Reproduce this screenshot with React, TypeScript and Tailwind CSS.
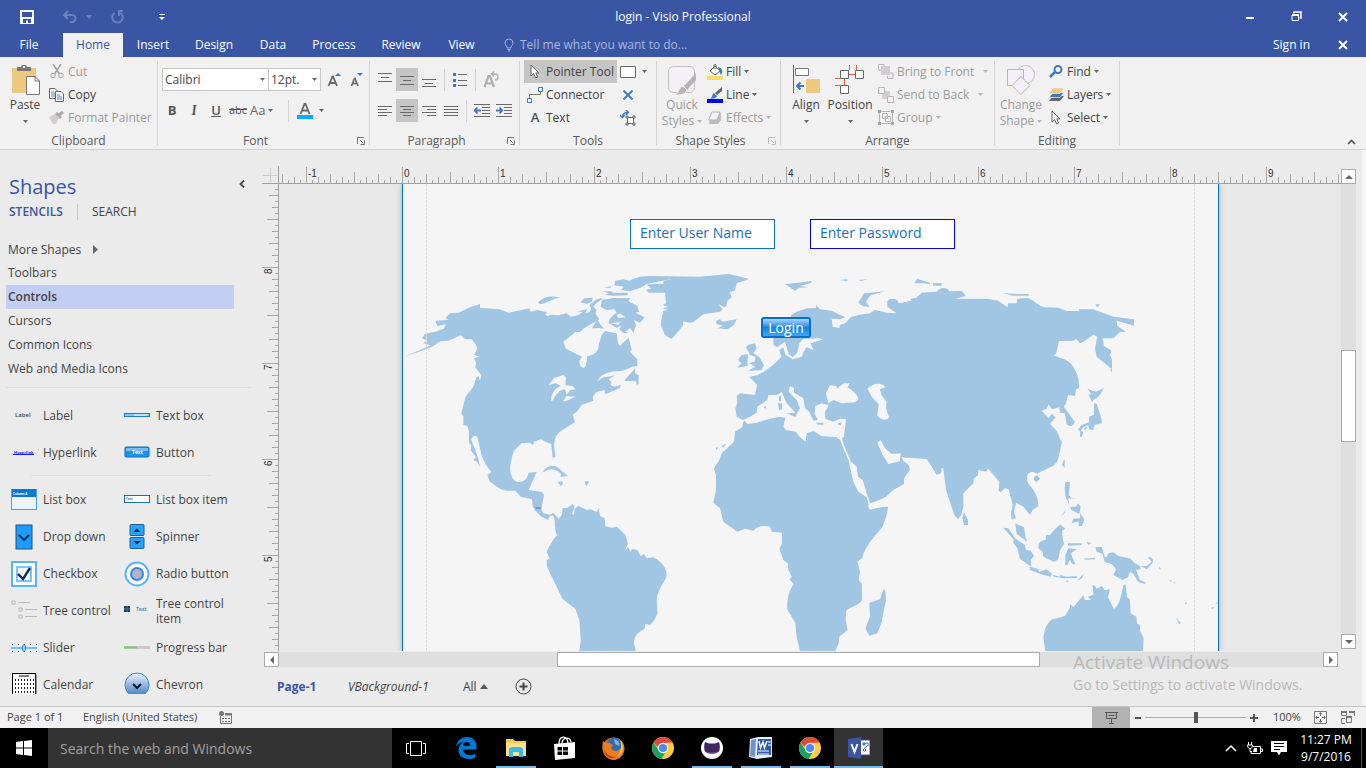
import React from "react";

type Kids = { children?: React.ReactNode };

/* ---------- small building blocks ---------- */

function Svg({ w, h, children, vb }: { w: number; h: number; vb?: string } & Kids) {
  return (
    <svg width={w} height={h} viewBox={vb ?? `0 0 ${w} ${h}`} fill="none" className="shrink-0" aria-hidden="true">
      {children}
    </svg>
  );
}

function Caret({ light }: { light?: boolean }) {
  return (
    <Svg w={5} h={3}>
      <path d="M0 0H5L2.5 3Z" fill={light ? "#b5b5b5" : "#666"} />
    </Svg>
  );
}

function Group({ title, width, launcher, children }: { title: string; width: string; launcher?: "on" | "off" } & Kids) {
  return (
    <section className={`flex shrink-0 flex-col border-r border-[#d2d2d2] ${width}`}>
      <div className="flex h-[74px] shrink-0 items-start">{children}</div>
      <div className="flex h-3 shrink-0 items-center">
        <h2 className="flex-1 text-center text-[12px] leading-3 text-[#5a5a5a]">{title}</h2>
        {launcher && (
          <button aria-label={`${title} settings`} className="ml-1 mr-1">
            <Svg w={8} h={8}>
              <path d="M0.5 7V0.5H7M3 3L6 6M7.5 3.5V7.5H3.5" stroke={launcher === "on" ? "#777" : "#bbb"} />
            </Svg>
          </button>
        )}
      </div>
    </section>
  );
}

function Cmd({ icon, label, caret, off, wide }: { icon: React.ReactNode; label: string; caret?: boolean; off?: boolean; wide?: boolean }) {
  return (
    <button className={`flex h-[23px] items-center gap-[3px] whitespace-nowrap ${off ? "text-[#9c9c9c]" : "text-[#444]"}`}>
      <span className="flex w-4 justify-center">{icon}</span>
      <span>{label}</span>
      {caret && (
        <span className={wide ? "ml-[6px]" : ""}>
          <Caret light={off} />
        </span>
      )}
    </button>
  );
}

function Glyph({ label, on, children }: { label: string; on?: boolean } & Kids) {
  return (
    <button aria-label={label} className={`flex h-[23px] w-[22px] items-center justify-center ${on ? "bg-[#c5c5c5]" : ""}`}>
      {children}
    </button>
  );
}

function Lines({ d }: { d: string }) {
  return (
    <Svg w={14} h={16}>
      <path d={d} stroke="#6a6a6a" />
    </Svg>
  );
}

const Sep = () => <span className="block h-[22px] w-px bg-[#d2d2d2]" />;

const PointerIcon = () => (
  <Svg w={10} h={15}>
    <path d="M1 1V12L3.6 9.6L5.6 14L7.6 13L5.8 8.9H9Z" fill="#fff" stroke="#666" />
  </Svg>
);

/* ---------- title bar and tabs ---------- */

function TitleBar() {
  return (
    <header className="bg-[#3955a3] text-white">
      <div className="relative flex h-[33px] items-center">
        <button aria-label="Save" className="ml-5">
          <Svg w={14} h={14}>
            <path d="M0 0H14V14H0Z" fill="#fff" />
            <path d="M2 2H12V7H2ZM3 9H11V13H8V10.500H6V13H3Z" fill="#3955a3" />
          </Svg>
        </button>
        <button aria-label="Undo" className="ml-7 flex items-center gap-2">
          <Svg w={16} h={14}>
            <path d="M2 5H10A3.500 3.500 0 0 1 10 12H8M6 1L2 5L6 9" stroke="#6c82c0" strokeWidth="2" />
          </Svg>
          <Svg w={6} h={4}>
            <path d="M0 0H6L3 4Z" fill="#6c82c0" />
          </Svg>
        </button>
        <button aria-label="Redo" className="ml-[18px]">
          <Svg w={15} h={14}>
            <path d="M4.500 3A5.300 5.300 0 1 0 10.500 3M8 1H13M9 1V6" stroke="#6c82c0" strokeWidth="2" />
          </Svg>
        </button>
        <button aria-label="Customize toolbar" className="ml-[34px]">
          <Svg w={6} h={6}>
            <path d="M0 0.500H6" stroke="#fff" />
            <path d="M0 3H6L3 6Z" fill="#fff" />
          </Svg>
        </button>
        <h1 className="pointer-events-none absolute inset-x-0 text-center text-[12px]">login - Visio Professional</h1>
        <div className="ml-auto flex items-center gap-9 pr-[18px]">
          <button aria-label="Minimize">
            <Svg w={10} h={10}>
              <path d="M1 6H9" stroke="#fff" strokeWidth="2" />
            </Svg>
          </button>
          <button aria-label="Restore">
            <Svg w={11} h={11}>
              <path d="M3 2.500V1H10V7H8.500" stroke="#fff" strokeWidth="1.500" />
              <path d="M1 4H7.500V9.500H1Z" stroke="#fff" />
              <path d="M1 4H8" stroke="#fff" strokeWidth="2" />
            </Svg>
          </button>
          <CloseIcon label="Close" />
        </div>
      </div>
      <nav className="flex h-6 items-center text-[12px]">
        <button className="h-6 w-[58px]">File</button>
        <button className="ml-[5px] h-6 w-[60px] bg-[#f1f1f1] text-[#3955a3]">Home</button>
        {[
          ["Insert", "w-[60px]"],
          ["Design", "w-[62px]"],
          ["Data", "w-[56px]"],
          ["Process", "w-[66px]"],
          ["Review", "w-[68px]"],
          ["View", "w-[53px]"],
        ].map(([t, w]) => (
          <button key={t} className={`h-6 ${w}`}>
            {t}
          </button>
        ))}
        <label className="ml-4 flex items-center gap-[6px]">
          <Svg w={10} h={14}>
            <path d="M3 10V8.500C1.500 7.500 1 6.200 1 5A4 4 0 0 1 9 5C9 6.200 8.500 7.500 7 8.500V10ZM3.500 11.500H6.500M4 13H6" stroke="#9fb0dc" />
          </Svg>
          <input
            aria-label="Tell me what you want to do"
            placeholder="Tell me what you want to do..."
            className="w-[200px] bg-transparent outline-none placeholder:text-[#a9b7dd]"
          />
        </label>
        <button className="ml-auto mr-7">Sign in</button>
        <span className="mr-[18px] flex">
          <CloseIcon label="Close document" />
        </span>
      </nav>
    </header>
  );
}

function CloseIcon({ label }: { label: string }) {
  return (
    <button aria-label={label}>
      <Svg w={10} h={10}>
        <path d="M1 1L9 9M9 1L1 9" stroke="#fff" strokeWidth="2" />
      </Svg>
    </button>
  );
}

/* ---------- ribbon ---------- */

function Ribbon() {
  return (
    <div className="relative flex h-[93px] shrink-0 overflow-hidden border-b border-[#d2d2d2] bg-[#f1f1f1] pb-1 pt-1 text-[12px] text-[#444]">
      <Group title="Clipboard" width="w-[158px]">
        <button className="ml-1 mt-[3px] flex w-[42px] flex-col items-center">
          <Svg w={30} h={32}>
            <path d="M2 4H26V29H2Z" fill="#edc87e" />
            <path d="M7 7V3H11C11 0 17 0 17 3H21V7Z" fill="#777" />
            <path d="M13 2H15V4H13Z" fill="#f1f1f1" />
            <path d="M16.500 12.500H25L29.500 17V30.500H16.500Z" fill="#fff" stroke="#777" />
            <path d="M25 12.500V17H29.500" stroke="#777" />
          </Svg>
          <span className="mb-[7px] mt-[1px] leading-4">Paste</span>
          <Caret />
        </button>
        <div className="-mt-px ml-[3px] flex flex-col">
          <Cmd
            off
            label="Cut"
            icon={
              <Svg w={14} h={15}>
                <path d="M3 0L9.500 10M11 0L4.500 10" stroke="#a5a5a5" strokeWidth="1.700" />
                <circle cx="3" cy="11.500" r="2.300" stroke="#a5a5a5" />
                <circle cx="11" cy="11.500" r="2.300" stroke="#a5a5a5" />
              </Svg>
            }
          />
          <Cmd
            label="Copy"
            icon={
              <Svg w={16} h={14}>
                <path d="M0.500 0.500H6L9.500 4V10.500H0.500Z" fill="#fff" stroke="#666" />
                <path d="M2 4H5M2 6H6M2 8H6" stroke="#4b83bc" />
                <path d="M6.500 3.500H12L14.500 6V13.500H6.500Z" fill="#fff" stroke="#666" />
                <path d="M8 7H11M8 9H13M8 11H13" stroke="#4b83bc" />
              </Svg>
            }
          />
          <Cmd
            off
            label="Format Painter"
            icon={
              <Svg w={16} h={14}>
                <path d="M0 6L6 3L10 7L7 13H4Z" fill="#d3ccd3" />
                <path d="M6 3L8 1L13 6L11 8Z" fill="#aaa" />
                <path d="M10 4L14 1" stroke="#aaa" strokeWidth="3" />
              </Svg>
            }
          />
        </div>
      </Group>

      <Group title="Font" width="w-[212px]" launcher="on">
        <div className="ml-1 mt-[7px] flex flex-col gap-2">
          <div className="flex items-center">
            <span className="relative flex">
              <select aria-label="Font" className="h-[23px] w-[107px] appearance-none border border-[#c6c6c6] bg-white pl-[2px] text-[12px]">
                <option>Calibri</option>
              </select>
              <span className="pointer-events-none absolute right-1 top-[10px]">
                <Caret />
              </span>
            </span>
            <span className="relative -ml-px flex">
              <select aria-label="Font size" className="h-[23px] w-[53px] appearance-none border border-[#c6c6c6] bg-white pl-[2px] text-[12px]">
                <option>12pt.</option>
              </select>
              <span className="pointer-events-none absolute right-1 top-[10px]">
                <Caret />
              </span>
            </span>
            <button aria-label="Increase font size" className="ml-[6px]">
              <Svg w={14} h={16}>
                <path d="M1.500 14L5.500 4.500H6L10 14M3 11H8.500" stroke="#6a6a6a" strokeWidth="1.800" />
                <path d="M8 4H14L11 1Z" fill="#3f7ab8" />
              </Svg>
            </button>
            <button aria-label="Decrease font size" className="ml-[9px]">
              <Svg w={13} h={16}>
                <path d="M1.500 14L4.500 6.500H5L8 14M2.500 11.500H7" stroke="#6a6a6a" strokeWidth="1.700" />
                <path d="M7 1H13L10 4Z" fill="#3f7ab8" />
              </Svg>
            </button>
          </div>
          <div className="flex h-[23px] items-center text-[13px] text-[#555]">
            <button className="w-5 font-bold">B</button>
            <button className="ml-[2px] w-5 font-serif font-bold italic">I</button>
            <button className="ml-[2px] w-5 font-semibold underline">U</button>
            <button className="w-6 text-[11px] line-through">abc</button>
            <button className="flex w-[30px] items-center gap-[3px] text-[#6a6a6a]">
              <span>Aa</span>
              <Caret />
            </button>
            <span className="mx-2">
              <Sep />
            </span>
            <button aria-label="Font color" className="flex items-center gap-[6px]">
              <Svg w={16} h={16}>
                <path d="M3.500 11L7.500 1H8.500L12.500 11M5 7.500H11" stroke="#6a6a6a" strokeWidth="1.800" />
                <path d="M0 12H16V16H0Z" fill="#00adef" />
              </Svg>
              <Caret />
            </button>
          </div>
        </div>
      </Group>

      <Group title="Paragraph" width="w-[150px]" launcher="on">
        <div className="ml-1 mt-[7px] flex flex-col gap-2">
          <div className="flex items-center">
            <Glyph label="Align top"><Lines d="M0 1.500H14M3 5.500H11M0 9.500H14" /></Glyph>
            <Glyph label="Align middle" on><Lines d="M0 4.500H14M3 8.500H11M0 12.500H14" /></Glyph>
            <Glyph label="Align bottom"><Lines d="M0 7.500H14M3 11.500H11M0 14.500H14" /></Glyph>
            <span className="mx-1"><Sep /></span>
            <Glyph label="Bullets">
              <Svg w={14} h={16}>
                <path d="M5 2.500H14M5 8.500H14M5 13.500H14" stroke="#6a6a6a" />
                <path d="M0 1H3V4H0ZM0 7H3V10H0ZM0 12H3V15H0Z" fill="#3f7ab8" />
              </Svg>
            </Glyph>
            <span className="mx-1"><Sep /></span>
            <Glyph label="Rotate text">
              <Svg w={16} h={17}>
                <path d="M1.500 16L5.500 5H7L11 16M3 12.500H10" stroke="#b0b0b0" strokeWidth="2.200" />
                <path d="M9 3H12A2.500 2.500 0 0 1 12 9M11 0.500L8.500 3L11 5.500" stroke="#b0b0b0" strokeWidth="1.300" />
              </Svg>
            </Glyph>
          </div>
          <div className="flex items-center">
            <Glyph label="Align left"><Lines d="M0 3.500H14M0 6.500H9M0 9.500H14M0 12.500H9" /></Glyph>
            <Glyph label="Center" on><Lines d="M0 3.500H14M3 6.500H11M0 9.500H14M3 12.500H11" /></Glyph>
            <Glyph label="Align right"><Lines d="M0 3.500H14M5 6.500H14M0 9.500H14M5 12.500H14" /></Glyph>
            <Glyph label="Justify"><Lines d="M0 3.500H14M0 6.500H14M0 9.500H14M0 12.500H14" /></Glyph>
            <span className="mx-1"><Sep /></span>
            <Glyph label="Decrease indent">
              <Svg w={16} h={13}>
                <path d="M0 0.500H16M8 3.500H16M8 6.500H16M8 9.500H16M0 12.500H16" stroke="#6a6a6a" />
                <path d="M7 6.500H1M3.500 3.500L0.800 6.500L3.500 9.500" stroke="#3f7ab8" strokeWidth="1.800" />
              </Svg>
            </Glyph>
            <Glyph label="Increase indent">
              <Svg w={16} h={13}>
                <path d="M0 0.500H16M8 3.500H16M8 6.500H16M8 9.500H16M0 12.500H16" stroke="#6a6a6a" />
                <path d="M0 6.500H6M3.500 3.500L6.200 6.500L3.500 9.500" stroke="#3f7ab8" strokeWidth="1.800" />
              </Svg>
            </Glyph>
          </div>
        </div>
      </Group>

      <Group title="Tools" width="w-[137px]">
        <div className="-mt-px ml-1 flex flex-col">
          <button className="flex h-[23px] w-[93px] items-center gap-[6px] whitespace-nowrap bg-[#c5c5c5] pl-[6px]">
            <PointerIcon />
            Pointer Tool
          </button>
          <button className="flex h-[23px] items-center gap-[3px] pl-[3px]">
            <Svg w={16} h={16}>
              <path d="M2.500 11V7.500H13.500V5" stroke="#777" />
              <path d="M0.500 11.500H4.500V15.500H0.500ZM11.500 0.500H15.500V4.500H11.500Z" fill="#fff" stroke="#3f7ab8" />
            </Svg>
            Connector
          </button>
          <button className="flex h-[23px] items-center gap-[6px] pl-[6px]">
            <span className="w-[10px] text-[13px] font-semibold text-[#555]">A</span>
            Text
          </button>
        </div>
        <div className="-mt-px ml-[3px] flex flex-col">
          <button aria-label="Rectangle" className="flex h-[23px] items-center gap-[6px]">
            <Svg w={16} h={12}>
              <path d="M0.500 0.500H15.500V11.500H0.500Z" fill="#fff" stroke="#666" />
            </Svg>
            <Caret />
          </button>
          <button aria-label="Connection point" className="flex h-[23px] w-4 items-center justify-center">
            <Svg w={12} h={10}>
              <path d="M1.500 0.500L10.500 9.500M10.500 0.500L1.500 9.500" stroke="#3f7ab8" strokeWidth="2" />
            </Svg>
          </button>
          <button aria-label="Text block" className="flex h-[23px] w-4 items-center justify-center">
            <Svg w={16} h={16}>
              <path d="M7.500 7.500H13.500V13.500H7.500Z" fill="#fff" stroke="#666" />
              <path d="M6 6H8V8H6ZM13 6H15V8H13ZM6 13H8V15H6ZM13 13H15V15H13Z" fill="#fff" stroke="#666" />
              <path d="M2.500 7C2.500 4 4 2.500 8 2.500M6 0L8.500 2.500L6 5M0 5L2.500 7.500L5 5" stroke="#3f7ab8" strokeWidth="1.300" />
            </Svg>
          </button>
        </div>
      </Group>

      <Group title="Shape Styles" width="w-[124px]" launcher="off">
        <button className="ml-[5px] mt-1 flex w-10 flex-col items-center leading-4 text-[#9c9c9c]">
          <Svg w={30} h={32}>
            <rect x="1.500" y="1.500" width="26" height="26" rx="5" fill="#f5f0f7" stroke="#c3bfc5" />
            <path d="M29 8V15L20 25L17 21Z" fill="#b5b5b5" />
            <path d="M16 21L20 25C18 30 13 30 8 30C12 28 11 23 16 21Z" fill="#b5b5b5" stroke="#f1f1f1" />
          </Svg>
          Quick
          <span className="flex items-center gap-[3px]">
            Styles <Caret light />
          </span>
        </button>
        <div className="-mt-px ml-[5px] flex flex-col">
          <Cmd
            caret
            label="Fill"
            icon={
              <Svg w={16} h={16}>
                <path d="M3 7L8 2L13 7L8 11Z" fill="#fff" stroke="#666" />
                <path d="M7 5V1.500C7 0 9 0 9 1.500V5" stroke="#666" />
                <path d="M11 3C16 4 16 8 14 11L12 7Z" fill="#3f7ab8" />
                <path d="M0 12H16V16H0Z" fill="#ffd966" />
              </Svg>
            }
          />
          <Cmd
            caret
            label="Line"
            icon={
              <Svg w={16} h={16}>
                <path d="M15 0V4L10 8L8 6Z" fill="#666" />
                <path d="M7 6L10 9C9 12 6 11 3 12C6 10 5 7 7 6Z" fill="#3f7ab8" />
                <path d="M0 12H16V16H0Z" fill="#00f" />
              </Svg>
            }
          />
          <Cmd
            off
            caret
            label="Effects"
            icon={
              <Svg w={16} h={14}>
                <path d="M4 3L14 2V9L11 13H2Z" fill="#bbb" />
                <path d="M5 1H13L10 9H1.500Z" fill="#f5f0f7" stroke="#b5b5b5" />
              </Svg>
            }
          />
        </div>
      </Group>

      <Group title="Arrange" width="w-[214px]">
        <button className="ml-[7px] mt-1 flex w-9 flex-col items-center">
          <Svg w={28} h={30}>
            <path d="M1.500 0V28" stroke="#666" />
            <path d="M3.500 3.500H16.500V10.500H3.500Z" fill="#fff" stroke="#777" />
            <path d="M14 14H28V28H14Z" fill="#edc87e" />
            <path d="M12 21H5M8.500 17.500L5 21L8.500 24.500" stroke="#3f7ab8" strokeWidth="2" />
          </Svg>
          <span className="mb-[7px] mt-[2px] leading-4">Align</span>
          <Caret />
        </button>
        <button className="ml-px mt-1 flex w-[50px] flex-col items-center">
          <Svg w={30} h={30}>
            <path d="M14.500 0V5M21.500 0V5M0 13.500H5M0 20.500H5M13 9.500H21M9.500 14V21" stroke="#e0603c" />
            <path d="M5.500 5.500H13.500V13.500H5.500ZM20.500 5.500H28.500V13.500H20.500ZM5.500 20.500H13.500V28.500H5.500Z" fill="#fff" stroke="#666" />
          </Svg>
          <span className="mb-[7px] mt-[2px] leading-4">Position</span>
          <Caret />
        </button>
        <div className="-mt-px ml-[3px] flex flex-col">
          <Cmd
            off
            caret
            wide
            label="Bring to Front"
            icon={
              <Svg w={16} h={15}>
                <path d="M0.500 6V0.500H6V2M15 9V14.500H9.500V12M0.500 6H3M15 9H12" stroke="#b5b5b5" />
                <path d="M3 2H12V11H3Z" fill="#d3ccd3" />
              </Svg>
            }
          />
          <Cmd
            off
            caret
            wide
            label="Send to Back"
            icon={
              <Svg w={16} h={16}>
                <path d="M4 4H12V12H4Z" fill="#d3ccd3" />
                <path d="M0.500 0.500H6.500V6.500H0.500ZM9.500 9.500H15.500V15.500H9.500Z" fill="#f5f5f5" stroke="#b5b5b5" />
              </Svg>
            }
          />
          <Cmd
            off
            caret
            label="Group"
            icon={
              <Svg w={16} h={15}>
                <path d="M1.500 1.500H14.500V13.500H1.500ZM4.500 3.500H9.500V8.500H4.500ZM7.500 6.500H12.500V11.500H7.500Z" stroke="#b5b5b5" />
                <path d="M0 0H3V3H0ZM13 0H16V3H13ZM0 12H3V15H0ZM13 12H16V15H13Z" fill="#a5a5a5" />
              </Svg>
            }
          />
        </div>
      </Group>

      <Group title="Editing" width="w-[125px]">
        <button className="ml-1 mt-1 flex w-[44px] flex-col items-center leading-4 text-[#9c9c9c]">
          <Svg w={30} h={32}>
            <circle cx="19.500" cy="9.500" r="9" fill="#f5f0f7" stroke="#c3bfc5" />
            <path d="M1.500 4.500H17.500V20.500H1.500Z" fill="#f5f0f7" stroke="#b5b5b5" />
            <path d="M15 11.500L24 20.500L15 29.500L6 20.500Z" fill="#f5f0f7" stroke="#b5b5b5" />
          </Svg>
          Change
          <span className="flex items-center gap-[3px]">
            Shape <Caret light />
          </span>
        </button>
        <div className="-mt-px ml-[5px] flex flex-col">
          <Cmd
            caret
            label="Find"
            icon={
              <Svg w={14} h={13}>
                <circle cx="9" cy="4.500" r="3.500" fill="#f5f5f5" stroke="#3f7ab8" strokeWidth="2" />
                <path d="M6 7L1 12" stroke="#3f7ab8" strokeWidth="2.500" />
              </Svg>
            }
          />
          <Cmd
            caret
            label="Layers"
            icon={
              <Svg w={15} h={13}>
                <path d="M4 8H15L11 13H0Z" fill="#666" />
                <path d="M4 4.500H15L11 9.500H0Z" fill="#3f7ab8" stroke="#f1f1f1" strokeWidth="0.700" />
                <path d="M4 0H15L11 5.500H0Z" fill="#edc87e" stroke="#f1f1f1" strokeWidth="0.700" />
              </Svg>
            }
          />
          <Cmd caret label="Select" icon={<PointerIcon />} />
        </div>
      </Group>
      <button aria-label="Collapse ribbon" className="ml-auto mr-[10px] self-end">
        <Svg w={9} h={6}>
          <path d="M1 5L4.500 1.500L8 5" stroke="#555" strokeWidth="1.600" />
        </Svg>
      </button>
    </div>
  );
}

/* ---------- shapes pane ---------- */

const shapeIcons: Record<string, React.ReactNode> = {
  Label: <text x="4" y="14" fontSize="6" fontWeight="600" fill="#2a4a66">Label</text>,
  "Text box": (
    <>
      <rect x="0.500" y="10.500" width="25" height="3" fill="#8ac6f5" stroke="#1b7fd0" />
      <path d="M10 12H23" stroke="#fff" />
    </>
  ),
  Hyperlink: (
    <>
      <text x="3" y="14" fontSize="4" fontWeight="700" fill="#1a1aff">Hyperlink</text>
      <path d="M2 14.500H23" stroke="#1a1aff" />
    </>
  ),
  Button: (
    <>
      <rect x="1" y="7" width="24" height="10" rx="1" fill="#1d93ee" stroke="#0a6cbc" />
      <path d="M2 8H24V11H2Z" fill="#6fbef8" />
      <text x="8" y="14" fontSize="5" fontWeight="700" fill="#fff">Text</text>
    </>
  ),
  "List box": (
    <>
      <rect x="0.500" y="2.500" width="25" height="20" fill="#eef3f7" stroke="#4aa3e8" />
      <path d="M1 2H25V10H1Z" fill="#0b78cf" />
      <text x="2" y="8" fontSize="3" fontWeight="700" fill="#fff">Column A</text>
    </>
  ),
  "List box item": (
    <>
      <rect x="0.500" y="8.500" width="25" height="7" fill="#fff" stroke="#1b6fb5" />
      <text x="2" y="13" fontSize="3" fontWeight="700" fill="#1b6fb5">Text</text>
    </>
  ),
  "Drop down": (
    <>
      <rect x="5" y="1" width="16" height="24" fill="#1e9bff" stroke="#1c4f7c" />
      <path d="M8 11L13 16L18 11" stroke="#06305a" strokeWidth="2" />
    </>
  ),
  Spinner: (
    <>
      <rect x="6" y="0.500" width="14" height="11" rx="1" fill="#2aa0ff" stroke="#1c5f96" />
      <rect x="6" y="13.500" width="14" height="11" rx="1" fill="#2aa0ff" stroke="#1c5f96" />
      <path d="M9.500 8H16.500L13 4.500ZM9.500 17H16.500L13 20.500Z" fill="#06305a" />
    </>
  ),
  Checkbox: (
    <>
      <rect x="1" y="1" width="24" height="24" fill="#fff" stroke="#5ab4fa" strokeWidth="2" />
      <rect x="6" y="6" width="14" height="14" fill="#fff" stroke="#7cc3fb" strokeWidth="2" />
      <path d="M7 13L12 18L19 7" stroke="#06305a" strokeWidth="2.400" />
    </>
  ),
  "Radio button": (
    <>
      <circle cx="13" cy="13" r="11.500" fill="#fff" stroke="#5ab4fa" strokeWidth="2" />
      <circle cx="13" cy="13" r="6" fill="#b9aecb" stroke="#2a8fe6" strokeWidth="2" />
    </>
  ),
  "Tree control": (
    <>
      <rect x="1" y="3" width="3" height="3" stroke="#bbb" />
      <rect x="8" y="10" width="3" height="3" stroke="#bbb" />
      <rect x="8" y="17" width="3" height="3" stroke="#bbb" />
      <path d="M7 4.500H19M14 11.500H26M14 18.500H26" stroke="#bbb" />
    </>
  ),
  "Tree control item": (
    <>
      <path d="M0 8H6V14H0Z" fill="#12405f" />
      <path d="M0 11H6M3 8V14" stroke="#5d8fae" strokeWidth="0.700" />
      <text x="12" y="13" fontSize="5" fontWeight="600" fill="#2b79b5">Text</text>
    </>
  ),
  Slider: (
    <>
      <path d="M0 13H26" stroke="#6fc0fa" strokeWidth="2" />
      <path d="M1 9.500H26M1 16.500H26" stroke="#3a6d95" strokeDasharray="1 5" />
      <ellipse cx="13" cy="13" rx="1.500" ry="3.500" fill="#9fd3fb" stroke="#2a8fe6" />
    </>
  ),
  "Progress bar": (
    <>
      <path d="M0 12.500H26" stroke="#c8c8c8" strokeWidth="3" />
      <path d="M0 12.500H13" stroke="#7cc87c" strokeWidth="2" />
    </>
  ),
  Calendar: (
    <>
      <rect x="1.500" y="1.500" width="23" height="24" fill="#fff" stroke="#000" />
      <path d="M8 4H18" stroke="#000" />
      <path d="M4 8H23M4 12H23M4 16H23M4 20H23" stroke="#222" strokeWidth="2" strokeDasharray="1 2" />
      <path d="M25 3V26" stroke="#444" />
    </>
  ),
  Chevron: (
    <>
      <defs>
        <linearGradient id="chev" x1="0" y1="0" x2="0" y2="1">
          <stop offset="0" stopColor="#f0f4fb" />
          <stop offset="1" stopColor="#3f74c4" />
        </linearGradient>
      </defs>
      <circle cx="13" cy="13" r="12" fill="url(#chev)" stroke="#2a8fd6" />
      <path d="M9 12L13 16L17 12" stroke="#0a1a30" strokeWidth="2" />
    </>
  ),
};

function ShapeGrid({ names }: { names: string[] }) {
  return (
    <div className="grid auto-rows-[37px] grid-cols-[113px_1fr]">
      {names.map((n) => (
        <button key={n} className="flex items-center gap-[6px] text-left leading-[15px]">
          <Svg w={26} h={26}>{shapeIcons[n]}</Svg>
          <span className={n === "Tree control item" ? "w-[80px]" : "whitespace-nowrap"}>{n}</span>
        </button>
      ))}
    </div>
  );
}

function ShapesPane() {
  return (
    <aside className="flex w-[262px] shrink-0 flex-col overflow-hidden text-[12px] text-[#444]">
      <div className="flex h-[52px] items-end justify-between pl-[9px] pr-[17px]">
        <h2 className="text-[20px] leading-[30px] text-[#3955a3]">Shapes</h2>
        <button aria-label="Minimize pane" className="mb-[14px]">
          <Svg w={6} h={8}>
            <path d="M5 0.500L1.500 4L5 7.500" stroke="#444" strokeWidth="1.800" />
          </Svg>
        </button>
      </div>
      <div className="flex h-5 items-center pl-[9px]">
        <button className="w-[68px] text-left font-semibold text-[#3955a3]">STENCILS</button>
        <span className="h-4 w-px bg-[#c6c6c6]" />
        <button className="ml-[14px]">SEARCH</button>
      </div>
      <ul className="mt-4 pl-[6px] pr-7">
        <li className="flex h-[23px] items-center gap-3 pl-[2px]">
          More Shapes
          <Svg w={5} h={9}>
            <path d="M0 0L5 4.500L0 9Z" fill="#666" />
          </Svg>
        </li>
        {["Toolbars", "Controls", "Cursors", "Common Icons", "Web and Media Icons"].map((t) => (
          <li key={t} className={`h-6 pl-[2px] leading-6 ${t === "Controls" ? "bg-[#c2cef2] font-semibold" : ""}`}>
            {t}
          </li>
        ))}
      </ul>
      <hr className="ml-[6px] mr-[11px] mt-[6px] border-[#dedede]" />
      <div className="min-h-0 flex-1 overflow-hidden pl-[11px] pt-[9px]">
        <ShapeGrid names={["Label", "Text box", "Hyperlink", "Button"]} />
        <hr className="ml-5 mr-[51px] mt-1 border-[#dedede]" />
        <div className="pt-[5px]">
          <ShapeGrid
            names={["List box", "List box item", "Drop down", "Spinner", "Checkbox", "Radio button", "Tree control", "Tree control item", "Slider", "Progress bar", "Calendar", "Chevron"]}
          />
        </div>
      </div>
      <div className="h-3 shrink-0" />
    </aside>
  );
}

/* ---------- rulers ---------- */

const tickLength = (i: number) => (i % 16 === 0 ? 16 : i % 8 === 0 ? 11 : i % 4 === 0 ? 9 : i % 2 === 0 ? 6 : 3);

function HorizontalRuler() {
  const ticks = Array.from({ length: 177 }, (_, k) => k - 20);
  return (
    <svg
      className="h-[18px] min-w-0 flex-1 overflow-hidden border-b border-[#a0a0a0] font-['Liberation_Sans',sans-serif]"
      width="100%"
      height="18"
      aria-label="Horizontal ruler"
    >
      {ticks.map((i) => (
        <path key={i} d={`M${123.500 + i * 6} 18v-${tickLength(i) + 1}`} stroke="#a8a8a8" />
      ))}
      {ticks
        .filter((i) => i % 16 === 0)
        .map((i) => (
          <text key={i} x={125 + i * 6} y="11" fontSize="10" fill="#333">
            {i / 16}
          </text>
        ))}
    </svg>
  );
}

function VerticalRuler() {
  const ticks = Array.from({ length: 94 }, (_, k) => k - 13);
  return (
    <svg
      className="w-[17px] shrink-0 overflow-hidden border-r border-[#a0a0a0] font-['Liberation_Sans',sans-serif]"
      width="17"
      height="100%"
      aria-label="Vertical ruler"
    >
      {ticks.map((i) => (
        <path key={i} d={`M16 ${83.500 + i * 6}h-${tickLength(i)}`} stroke="#a8a8a8" />
      ))}
      {[8, 7, 6, 5].map((n, k) => (
        <text key={n} transform={`translate(10 ${90 + k * 96}) rotate(-90)`} fontSize="10" fill="#333">
          {n}
        </text>
      ))}
    </svg>
  );
}

/* ---------- drawing page ---------- */

const americas = [
  // North and Central America
  "M12 290L60 270 92 256 70 250 82 240 66 236 74 222 110 214 132 206 138 192 112 199 106 182 146 180 136 174 150 160 176 158 210 142 240 132V143L298 148 326 158 388 145 392 155 412 150 440 157 436 164 444 169 452 164 476 166 500 160 512 170 534 166 548 156 532 154 552 150 562 146 556 160 570 156 574 140 586 122 610 116 592 126 580 140 590 150 586 160 598 178 580 188 560 200 550 206 540 216H526L490 246 498 266 546 290 538 302C538 315 545 325 553 323 560 318 560 300 562 288 580 288 597 275 596 255L605 225 615 213 650 220 654 250 660 258 672 245 686 233 695 268 690 275 712 298V318C690 318 680 334 650 334 620 336 600 345 592 365 600 355 612 350 624 350L646 346 626 358 634 366 632 376 642 380 662 374 660 384 616 403 614 390 590 396 578 410 580 422 560 430 545 434 532 454 518 464 525 486 480 515C460 530 460 560 467 590L458 594 454 552 436 545 422 538 402 545 400 555 388 548 365 550 342 572C335 590 330 620 330 630 334 650 340 665 356 666 380 664 382 650 386 638L410 636 398 662 386 690 425 696 432 704 424 748 430 760 450 764 460 758 476 776 466 788 460 768C452 764 446 770 445 781L425 770 406 752 398 738 396 718 362 710 346 692 320 692C300 690 285 676 270 665L262 645 274 636 258 615 245 588 232 530C225 526 215 528 214 540L228 575 236 600 240 622 232 606 220 600 228 592 212 570 214 556 207 548 206 510 202 498 190 494V470L184 460 190 435 197 410 220 380 230 350 236 349 240 362 244 346 226 322 228 306 222 295 238 290 222 284 232 265 228 256 216 238 196 238 182 226 146 242 122 244 94 262 60 274Z",
  // South America
  "M464 788L476 776 486 764 488 744 502 744 518 732 524 740 516 762 522 764 524 746 535 738 560 750 572 748 590 756 596 744 600 768 614 775 616 798 635 803 650 800 676 824 684 852 674 874 684 862 692 876 696 866 712 870 722 888 732 882 740 895 760 892C785 905 800 925 800 945 795 970 775 980 770 1020L773 1058C765 1080 755 1090 750 1095L736 1092 734 1106C715 1115 700 1130 702 1150L708 1175H538L542 1140 538 1080 526 1046 487 1016 441 920 440 900 449 896 440 875 446 862 462 836 471 826 466 812Z",
  // Arctic islands
  "M414 129C430 110 450 106 480 113 455 115 440 130 420 133ZM543 124L554 115 578 113 576 126 560 131 545 128ZM568 136L590 118 610 114 590 128 572 142Z",
  "M606 94L636 94V98H684L682 106 640 107 612 104 628 100ZM612 84L634 78 632 83Z",
  "M642 76L646 62 670 58 686 62 720 50 750 48 820 52 900 52 816 57 780 64 740 72 720 84 690 94 662 90 672 80Z",
  "M602 140L606 120 640 114 690 115 686 124 712 138 717 155 706 158 734 172 720 188 702 180 708 196 700 218 690 204 672 218 658 208 664 196 650 204 626 190 630 172 650 158 644 148 620 150Z",
  "M576 205L592 178 600 192 612 206 596 204ZM656 215L684 216 680 220Z",
  // Newfoundland and the Caribbean
  "M674 360L706 325 705 340 716 346V372L710 374 708 364 676 363Z",
  "M429 634C445 612 470 614 486 634L504 648 482 650 484 642C465 625 450 624 432 636ZM472 666L488 664 488 674 482 678ZM554 664L568 664 560 678 555 672Z",
];

const americaWater = [
  "M446 375L462 354 490 345 498 352 496 376 518 378 526 388 510 390 500 404 495 388C480 388 465 405 460 420L454 423C452 400 468 382 482 378L468 370Z",
  "M488 424L500 408 526 410 500 422ZM624 164L640 156 640 166 630 176ZM650 165L660 160 676 172 655 174ZM586 140L605 150 596 162ZM630 190L660 186 656 194Z",
];

const middle = [
  // Greenland
  "M-20 56L40 48 180 50 265 42 290 47 328 57 290 70 285 92 270 96 275 112 262 122 258 140 250 140 234 132 248 148 240 155 190 163 160 186 148 188 130 184 128 198 110 220 95 237 75 225 62 195 64 180 70 152 85 150 68 146 84 140 68 135 78 130 75 98H26L18 90 34 86 20 73 70 71V63L95 57Z",
  // Iceland, Svalbard, northern islands
  "M228 182L240 178 248 185 290 178 282 195 262 208 232 205 248 197 230 192ZM435 72L460 70 515 63 514 69 480 78 505 82 478 83 465 92 458 88ZM596 60L622 58V63ZM655 60L684 58 664 63ZM655 128L672 100 735 94 692 106 678 124 688 142 668 138ZM823 70L832 58 870 70ZM878 70H905V77Z",
  // Great Britain and Ireland
  "M318 262L324 254 345 250 350 265 340 278 358 292 372 315 365 330 325 333 345 320 328 310 345 304 346 290 330 285ZM304 286L324 282 322 318 292 323 304 310 294 300Z",
  // Africa
  "M312 480L322 492 350 488 390 476 420 470 436 474 430 500 438 510 468 515 480 532 497 545 500 520 520 513 545 528 590 532 600 540 625 600 632 630 640 665 655 695 680 712 690 748 745 738 740 765 728 800C700 835 680 850 666 895L652 905 660 935 656 960 666 972V1020C655 1040 625 1040 618 1055L617 1080 623 1110 598 1130 596 1150 585 1175H480L470 1130 466 1090 442 1048C440 1010 450 990 461 972L448 958 456 950 445 930 443 910 430 900 418 866 426 850 426 818 395 815 390 800C370 795 350 798 340 812L315 806 292 815 250 785 240 745 220 728 228 690V645L222 625 238 600 245 580 282 545 285 515 306 502Z",
  // Madagascar
  "M731 986L736 994 738 1020 724 1090 712 1120 688 1127 676 1105 690 1070 688 1028 720 1018Z",
  // Europe, Near East and the western part of Asia
  "M308 480L290 470 286 445 292 430 290 408 300 400 345 405 351 375 328 350 352 346 372 335 395 318 415 300 424 290 418 270 430 262 436 284 458 298 486 290 490 276 500 262 520 270 512 250 550 238 534 234 520 236 490 236 478 250 472 278 458 292 446 282 435 245 412 262 400 255V235L430 210 455 164 470 155 500 145 528 144 528 135 540 148 575 152 615 172 600 178 575 176 578 200 598 204 600 194 616 190 632 172 655 165 690 160 705 150 740 158 770 160 742 140V124C748 114 770 114 775 125L772 150 785 160 790 178 803 172 800 160 780 128 795 145 790 125 830 135 800 125 838 115 830 110 860 98 900 95V640L890 643 862 597 785 592 790 604C805 610 812 622 808 632L792 655V672L760 690 730 718 690 730 680 700 668 660 654 650 650 620 632 604 612 555 606 535 612 530 618 478 600 476 580 485 556 476 555 456 566 436 545 430 526 438 524 462 534 480 520 482 508 455 495 445 490 415 462 398 462 385 450 378 446 395 470 420 480 445 470 462 440 430 425 396 410 405 385 405 382 420 352 440 350 458 330 470Z",
  // Mediterranean islands, Canaries
  "M417 408H423V424H417ZM414 430H426V449H417ZM440 460L470 458 468 472ZM370 442L378 438V446ZM528 488H550V494H532ZM590 492L606 486 602 496ZM246 556L258 552 250 564ZM228 562H232V568H228ZM764 729H772V733H764Z",
];

const middleWater = [
  "M558 400L570 376 590 378V386L612 370 630 370 622 382C640 392 655 408 655 418L645 427 605 430 580 420 565 430Z",
  "M682 385L700 374C715 368 730 372 736 382L720 388 724 405 740 425 738 445 747 472C742 482 720 482 712 466L716 432 695 410Z",
  "M712 548L722 540 735 565 755 582 782 580 780 604 745 612 738 600 728 585Z",
  "M684 738L690 732 740 710 766 688 800 676 790 730 742 740 712 742 690 750Z",
];

const east = [
  "M-10 130L45 125 30 118 52 112 65 98 110 95C115 85 140 76 148 94L185 93 198 108 165 116 260 116 295 122 322 142 325 130 350 130 352 116 382 114C405 120 415 140 435 142L475 143 500 153 538 153 537 148 580 148 600 155 640 170 702 178 702 197 650 182 652 198 678 215 660 216 640 235 608 235 612 258 635 272 630 285 636 300V328L590 290 585 265 592 230 580 224 570 232 550 245 540 250 530 238 516 243H477L468 282 460 286 490 297C520 305 540 350 537 385L528 388 525 408 504 405 498 430 492 440 524 485C520 500 510 502 500 492L494 460 480 458 478 442 455 448 446 432 440 446 425 453 446 474 455 462 467 472 450 492 470 512 480 536 486 545 476 590C470 625 440 620 412 642 385 625 375 650 385 670 400 690 415 705 415 738L398 750 390 765 370 740 348 728 342 755 348 775 335 778 333 760 338 735 326 688 315 685 302 697 296 692 298 665 265 626 258 635 235 630 234 646 222 655 220 670 190 700V740L184 765 174 778 163 765 138 690 130 625H124V638L110 645 96 620 80 597 65 593 5 591-10 590Z",
  // Arctic islands
  "M46 62L52 57 90 68V72L75 70ZM98 69L122 72V77H100ZM308 99L350 102 386 102V107L340 107ZM585 133L600 133 592 142ZM630 328H636V338Z",
  // Malay peninsula, Sri Lanka, Hainan, Taiwan
  "M346 790L372 802 376 830 382 845 350 822ZM192 757L204 780V795H192L187 775ZM402 650L412 646 420 656 410 666 402 662ZM494 596V624L486 614Z",
  // Japan
  "M562 386L588 395 612 384 600 404 590 415 582 418 576 426 566 404 574 402ZM582 430L590 432 598 455 605 478V490L583 495 580 510 568 508 565 496 550 502 542 512 550 516 545 532 540 530 541 515 534 508 545 495 567 487V470L582 464ZM552 503L562 500 556 512Z",
  // Philippines
  "M496 665L510 667 508 690 506 706 514 714 530 714 505 716 508 734 496 708 494 685ZM510 740L528 740 534 730 542 740 538 762 514 750ZM515 790L520 776 540 775 540 760 553 778 546 798H536V784ZM482 770L498 748 494 758Z",
  // Indonesia
  "M480 793L496 806 486 812 488 835 492 852 480 870 475 898 462 906 430 890 428 875 416 866C414 850 420 842 437 840L438 825 450 825 460 812ZM310 803L325 805 345 835 375 855 378 870 392 872 402 888 392 900 394 920 360 897 352 865 340 848V838Z",
  "M388 920L412 926 418 935 440 928 456 942 452 950 430 945 390 930ZM458 944L480 950V945L500 950 530 948 532 954 490 955 462 950ZM530 964L554 938 545 955ZM498 962H505V965H498Z",
  "M496 915V885L505 865 530 868 513 880 517 892 526 912 520 914 509 900 503 915ZM503 850L545 850V855L505 857ZM560 845L575 850 564 854ZM550 896L585 893V898L556 899Z",
  // New Guinea and the Pacific
  "M586 862L605 860 614 890 620 892 625 880 640 877 655 888 690 895 705 910 720 918 722 928 708 930 720 960 738 968 736 972 715 966 700 942 690 935 684 952 668 960 640 945 648 928 635 912 614 906 608 882 590 875ZM722 918L740 918 755 905 744 892C756 888 766 904 752 916L740 928ZM776 918L783 928 778 926ZM803 958L815 962V966ZM820 966L830 970H822ZM826 1072L843 1089 838 1092ZM855 1028H860V1032H855ZM932 1043L942 1041 938 1047ZM945 1033L953 1025V1030Z",
  // Australia
  "M436 1175L430 1132 436 1105C445 1085 455 1076 465 1076L495 1068 510 1042V1032L520 1042 550 1006 555 1020 573 1020 563 1010 580 1004 578 975 586 978 590 986 605 978 614 990 630 988 624 1012 642 1047C660 1035 665 1000 670 976L677 973 681 1012 690 1018 692 1060 709 1070 711 1090 720 1095V1112L731 1135 729 1175Z",
];

const paths = (list: string[], fill: string) => list.map((d) => <path key={d} d={d} fill={fill} />);

function WorldMap() {
  const land = "#a0c6e4";
  const water = "#f5f5f5";
  return (
    <svg className="absolute left-0 top-0" width="815" height="467" viewBox="403 184 815 467" aria-label="World map">
      <g transform="translate(400 260) scale(0.33333)">
        {paths(americas, land)}
        {paths(americaWater, water)}
        <path d="M405 741H420L424 747H408Z" fill="#5b9fd4" />
      </g>
      <g transform="translate(900 260) scale(0.33333)">{paths(east, land)}</g>
      <g transform="translate(640 260) scale(0.33333)">
        {paths(middle, land)}
        {paths(middleWater, water)}
      </g>
      <path d="M426.500 184V651M1194.500 184V651" stroke="#dedede" strokeDasharray="3 1" />
    </svg>
  );
}

function DrawingPage() {
  return (
    <div className="min-w-0 flex-1 overflow-hidden bg-[#e8e8e8]">
      <div className="relative ml-[123px] h-full w-[817px] border-x border-[#0072c6] bg-[#f5f5f5] shadow-[0_0_6px_rgba(0,0,0,0.25)]">
        <WorldMap />
        <input
          aria-label="User name"
          defaultValue="Enter User Name"
          className="absolute left-[227px] top-[35px] h-[30px] w-[145px] border border-[#0a70c0] bg-white px-[9px] pb-1 text-[14px] font-medium text-[#1272be] outline-none"
        />
        <input
          aria-label="Password"
          defaultValue="Enter Password"
          className="absolute left-[407px] top-[35px] h-[30px] w-[145px] border border-[#0000f0] bg-white px-[9px] pb-1 text-[14px] font-medium text-[#1272be] outline-none"
        />
        <button className="absolute left-[358px] top-[133px] h-[21px] w-[50px] rounded-[3px] border-2 border-[#0a6fc8] bg-linear-to-b from-[#a4d8ff] via-[#1583dc] via-50% to-[#3aa8ff] text-[14px] font-medium leading-4 text-white">
          Login
        </button>
      </div>
    </div>
  );
}

/* ---------- scroll bars ---------- */

function ScrollButton({ label, d }: { label: string; d: string }) {
  return (
    <button aria-label={label} className="flex size-[15px] shrink-0 items-center justify-center border border-[#ababab] bg-white">
      <Svg w={8} h={8}>
        <path d={d} fill="#666" />
      </Svg>
    </button>
  );
}

function Workspace() {
  return (
    <main className="flex min-w-0 flex-1 flex-col">
      <div className="flex min-h-0 flex-1 pt-4">
        <div className="flex min-w-0 flex-1 flex-col">
          <div className="flex h-[18px] shrink-0">
            <div className="w-[17px] border-b border-r border-[#a0a0a0]">
              <Svg w={16} h={17}>
                <path d="M1 9.500H15M8.500 2V16" stroke="#ccc" />
              </Svg>
            </div>
            <HorizontalRuler />
          </div>
          <div className="flex min-h-0 flex-1">
            <VerticalRuler />
            <DrawingPage />
          </div>
        </div>
        <div className="flex w-[15px] flex-col pb-[2px] pt-[3px]">
          <ScrollButton label="Scroll up" d="M0 6H8L4 2Z" />
          <div className="flex flex-1 flex-col bg-[#dfdfdf]">
            <div className="flex-[167]" />
            <div className="flex-[90] border border-[#ababab] bg-white" />
            <div className="flex-[193]" />
          </div>
          <ScrollButton label="Scroll down" d="M0 2H8L4 6Z" />
        </div>
        <div className="w-[6px]" />
      </div>
      <div className="flex h-4 shrink-0 pl-[2px] pr-6 pt-px">
        <ScrollButton label="Scroll left" d="M6 0V8L2 4Z" />
        <div className="flex h-[15px] flex-1 bg-[#dfdfdf]">
          <div className="flex-[279]" />
          <div className="flex-[481] border border-[#ababab] bg-white" />
          <div className="flex-[284]" />
        </div>
        <ScrollButton label="Scroll right" d="M2 0V8L6 4Z" />
      </div>
      <div className="flex h-[39px] shrink-0 items-center pl-[15px] text-[12px] text-[#444]">
        <button className="w-[71px] text-left font-bold text-[#3955a3]">Page-1</button>
        <button className="w-[115px] text-left italic">VBackground-1</button>
        <button className="flex w-[52px] items-center gap-[3px]">
          All
          <Svg w={8} h={5}>
            <path d="M0 5H8L4 0Z" fill="#555" />
          </Svg>
        </button>
        <button aria-label="Insert page">
          <Svg w={17} h={17}>
            <circle cx="8.500" cy="8.500" r="7.500" stroke="#444" />
            <path d="M8.500 4.500V12.500M4.500 8.500H12.500" stroke="#444" strokeWidth="2" />
          </Svg>
        </button>
      </div>
    </main>
  );
}

/* ---------- status bar ---------- */

function StatusBar() {
  return (
    <footer className="flex h-[22px] shrink-0 items-center border-t border-[#c6c6c6] bg-[#f1f1f1] text-[11px] text-[#444]">
      <span className="w-[76px] whitespace-nowrap pl-[7px]">Page 1 of 1</span>
      <span className="ml-[7px] w-[136px] whitespace-nowrap">English (United States)</span>
      <button aria-label="Macros">
        <Svg w={13} h={13}>
          <path d="M1.500 5V12.500H12.500V2.500H6" stroke="#777" />
          <circle cx="2.500" cy="2.500" r="2.500" fill="#777" />
          <path d="M6 3.500H12" stroke="#777" strokeWidth="2" />
          <path d="M3 7.500H11M3 10.500H11" stroke="#777" strokeDasharray="2 1" />
        </Svg>
      </button>
      <button aria-label="Presentation mode" className="ml-auto flex h-[21px] w-[38px] items-center justify-center bg-[#b2b2b2]">
        <Svg w={13} h={13}>
          <path d="M0 1.500H13M1.500 2V7.500H11.500V2M3.500 4.500H9.500M6.500 8V12M4 12.500H9" stroke="#555" />
        </Svg>
      </button>
      <button aria-label="Zoom out" className="ml-[5px]">
        <Svg w={6} h={8}>
          <path d="M0 4H6" stroke="#555" strokeWidth="2" />
        </Svg>
      </button>
      <input
        type="range"
        aria-label="Zoom"
        defaultValue={50}
        className="mx-1 h-3 w-[101px] appearance-none bg-transparent bg-[linear-gradient(#aaa,#aaa)] bg-[length:100%_1px] bg-center bg-no-repeat [&::-webkit-slider-thumb]:h-[11px] [&::-webkit-slider-thumb]:w-1 [&::-webkit-slider-thumb]:appearance-none [&::-webkit-slider-thumb]:bg-[#555]"
      />
      <button aria-label="Zoom in">
        <Svg w={8} h={8}>
          <path d="M0 4H8M4 0V8" stroke="#555" strokeWidth="2" />
        </Svg>
      </button>
      <span className="ml-[15px] w-[41px]">100%</span>
      <button aria-label="Fit page to window">
        <Svg w={13} h={13}>
          <path d="M0.500 0.500H12.500V12.500H0.500Z" stroke="#777" />
          <path d="M6.500 2V5M6.500 8V11M2 6.500H5M8 6.500H11" stroke="#666" />
          <path d="M5 3L6.500 1.500L8 3M5 10L6.500 11.500L8 10M3 5L1.500 6.500L3 8M10 5L11.500 6.500L10 8" stroke="#666" strokeWidth="0.800" />
        </Svg>
      </button>
      <button aria-label="Switch windows" className="ml-[14px] mr-[11px]">
        <Svg w={14} h={13}>
          <path d="M0.500 0.500H5.500V4.500H0.500ZM0.500 12.500V7.500H4M5.500 5.500H10.500V11.500H5.500ZM8 0.500H13.500V5M0.500 12.500H4" stroke="#777" />
          <path d="M0 1H6M8 1H14M5 6H11" stroke="#777" strokeWidth="2" />
        </Svg>
      </button>
    </footer>
  );
}

/* ---------- taskbar ---------- */

function ChromeIcon() {
  return (
    <Svg w={22} h={22}>
      <circle cx="11" cy="11" r="11" fill="#ffcd40" />
      <path d="M1.500 5.500A11 11 0 0 0 9.500 21.900L15 13L11 11L6.500 13Z" fill="#1aa15f" />
      <path d="M1.500 5.500A11 11 0 0 1 20.500 5.500L11 6L8 12Z" fill="#dd4b3e" />
      <circle cx="11" cy="11" r="5.200" fill="#fff" />
      <circle cx="11" cy="11" r="4.100" fill="#4c8bf5" />
    </Svg>
  );
}

const apps: { name: string; state?: "open" | "active"; icon: React.ReactNode }[] = [
  {
    name: "Edge",
    icon: (
      <Svg w={21} h={22}>
        <path d="M0 10C1 3.500 5.500 0 11 0C17 0 20.500 4 20.500 9.500V12.500H7C7.500 16 10 18 13.500 18C16 18 18 17.300 19.300 16.400V20.500C17.500 21.500 15 22 12.500 22C6.500 22 2.500 18.500 2.500 13C2.500 9.500 4.500 6.500 8 5C4 5.300 1.500 7.300 0 10ZM7.200 8.800H14.200C14.200 6.300 12.800 4.900 10.800 4.900C8.800 4.900 7.400 6.500 7.200 8.800Z" fill="#0078d7" fillRule="evenodd" />
      </Svg>
    ),
  },
  {
    name: "File Explorer",
    state: "open",
    icon: (
      <Svg w={22} h={20}>
        <path d="M1 1H8L10 3H21V18H1Z" fill="#f3cb57" />
        <path d="M1 5H21V18H1Z" fill="#fbe08f" />
        <path d="M4 19V10.500L7 9H15L18 10.500V19H14V14H8V19Z" fill="#3ab9f0" />
      </Svg>
    ),
  },
  {
    name: "Store",
    icon: (
      <Svg w={21} h={24}>
        <path d="M0 8L21 6V22L1 24Z" fill="#fff" />
        <path d="M5 8C5 -1 13 -1 14 7M8 8C8 1 16 0 17 6" stroke="#fff" strokeWidth="1.300" />
        <path d="M3.500 11H8V14.500H3.500ZM9 11H14V14.500H9ZM3.500 15.500H8V19H3.500ZM9 15.500H14V19H9Z" fill="#000" />
      </Svg>
    ),
  },
  {
    name: "Firefox",
    icon: (
      <Svg w={23} h={23}>
        <circle cx="11.500" cy="11.500" r="11" fill="#e66a1c" />
        <circle cx="12.500" cy="8.500" r="8" fill="#2f6cb5" />
        <path d="M12 2C16 3 18 6 17 9L13 7Z" fill="#7db7e4" />
        <path d="M1 4C3 6 4 5 7 6L11 8L9 11C11 15 16 15 19 11C20 8 19 5 17 2C26 9 22 23 11 23C3 22-1 14 1 4Z" fill="#ea7d1f" />
        <path d="M18 3C23 8 22 17 15 20C19 16 20 9 18 3Z" fill="#f9c53a" />
        <path d="M2 12C4 18 9 20 14 20C9 23 2 20 2 12Z" fill="#c2401a" />
      </Svg>
    ),
  },
  { name: "Chrome", icon: <ChromeIcon /> },
  {
    name: "GitHub",
    state: "open",
    icon: (
      <Svg w={22} h={22}>
        <circle cx="11" cy="11" r="11" fill="#fff" />
        <path d="M4 5L8 6.500H14L18 5C19 8 19 10 18.500 13C17.500 18 4.500 18 3.500 13C3 10 3 8 4 5Z" fill="#43265f" />
        <path d="M5.500 14C8 16 14 16 16.500 14C15 17 7 17 5.500 14Z" fill="#7a5a99" />
      </Svg>
    ),
  },
  {
    name: "Word",
    state: "open",
    icon: (
      <Svg w={24} h={22}>
        <path d="M1 2L9 0H23V20L8 22L0 20Z" fill="#e8eefa" />
        <path d="M2 3L7 2L6 20L1 19Z" fill="#6f93cf" />
        <path d="M9 2H22V18H8Z" fill="#2b5ba8" />
        <path d="M10 4L11.500 11L14 5L15.500 11L18 4" stroke="#fff" strokeWidth="1.500" />
        <path d="M19 5H22M19 8H22M9 14H20M9 17H20" stroke="#fff" />
      </Svg>
    ),
  },
  { name: "Chrome window", state: "open", icon: <ChromeIcon /> },
  {
    name: "Visio",
    state: "active",
    icon: (
      <Svg w={22} h={22}>
        <path d="M12 3H22V18H12Z" fill="#fff" stroke="#3955a3" />
        <path d="M15 6H17V8H15ZM17.500 7A1.500 1.500 0 1 1 19 9L16.500 11M15 13L16.500 11.500L18 13L16.500 14.500Z" stroke="#3955a3" />
        <path d="M0 2L13 0V22L0 20Z" fill="#3955a3" />
        <path d="M3.500 7L6.500 15L9.500 7" stroke="#fff" strokeWidth="2" />
      </Svg>
    ),
  },
];

function Taskbar() {
  return (
    <div className="flex h-10 shrink-0 bg-black text-white">
      <button aria-label="Start" className="flex w-12 items-center justify-center">
        <Svg w={16} h={16}>
          <path d="M0 2L7 1V7.500H0ZM8 0.900L16 0V7.500H8ZM0 8.500H7V15L0 14ZM8 8.500H16V16L8 15.100Z" fill="#fff" />
        </Svg>
      </button>
      <input
        aria-label="Search"
        placeholder="Search the web and Windows"
        className="w-[344px] bg-[#333] px-3 text-[14px] outline-none placeholder:text-[#a0a0a0]"
      />
      <button aria-label="Task view" className="flex w-[50px] items-center pl-[14px]">
        <Svg w={20} h={15}>
          <path d="M4.500 0.500H15.500V14.500H4.500ZM3 2.500H0.500V12.500H3M17 2.500H19.500V12.500H17" stroke="#fff" />
        </Svg>
      </button>
      {apps.map((a) => (
        <button key={a.name} aria-label={a.name} className={`flex w-[49px] flex-col items-center ${a.state === "active" ? "bg-[#333]" : ""}`}>
          <span className="flex flex-1 items-center pt-[2px]">{a.icon}</span>
          <span className={`h-[2px] ${a.state === "active" ? "w-full bg-[#76b9ed]" : a.state === "open" ? "w-10 bg-[#76b9ed]" : "w-10"}`} />
        </button>
      ))}
      <div className="ml-auto flex items-center">
        <button aria-label="Show hidden icons">
          <Svg w={12} h={8}>
            <path d="M1 7L6 2L11 7" stroke="#fff" strokeWidth="1.500" />
          </Svg>
        </button>
        <span className="ml-[10px]">
          <Svg w={16} h={13}>
            <path d="M6 4.500H13.500V11.500H4V9M14 7H15.500V9.500H14" stroke="#fff" />
            <path d="M7 6H10V10H6Z" fill="#fff" />
            <path d="M1.500 0V3M4.500 0V3M0.500 3H5.500C5.500 6 4 6.500 3 6.500C2 6.500 0.500 6 0.500 3ZM3 6V9.500H5" stroke="#fff" />
          </Svg>
        </span>
        <button aria-label="Notifications" className="ml-2">
          <Svg w={16} h={16}>
            <path d="M0 1H16V12H10L8 15.500L6 12H0Z" fill="#fff" />
            <path d="M3 3.500H13M3 6.500H13M3 9.500H9" stroke="#000" />
          </Svg>
        </button>
        <div className="ml-2 mr-1 w-[62px] whitespace-nowrap text-center text-[12px] leading-[17px]">
          <div>11:27 PM</div>
          <div>9/7/2016</div>
        </div>
        <span className="mr-1 h-10 w-px bg-[#555]" />
      </div>
    </div>
  );
}

export default function App() {
  return (
    <div className="flex h-screen flex-col overflow-hidden bg-[#ebebeb] font-['Open_Sans','Noto_Sans',sans-serif]">
      <TitleBar />
      <Ribbon />
      <div className="relative flex min-h-0 flex-1">
        <ShapesPane />
        <Workspace />
        <div className="w-1 bg-[#f5f5f5]" />
        <div className="pointer-events-none absolute bottom-[10px] right-[57px] w-[236px] whitespace-nowrap text-[#b9b9b9]">
          <p className="text-[19px] leading-6">Activate Windows</p>
          <p className="text-[14px] leading-[22px]">Go to Settings to activate Windows.</p>
        </div>
      </div>
      <StatusBar />
      <Taskbar />
    </div>
  );
}
